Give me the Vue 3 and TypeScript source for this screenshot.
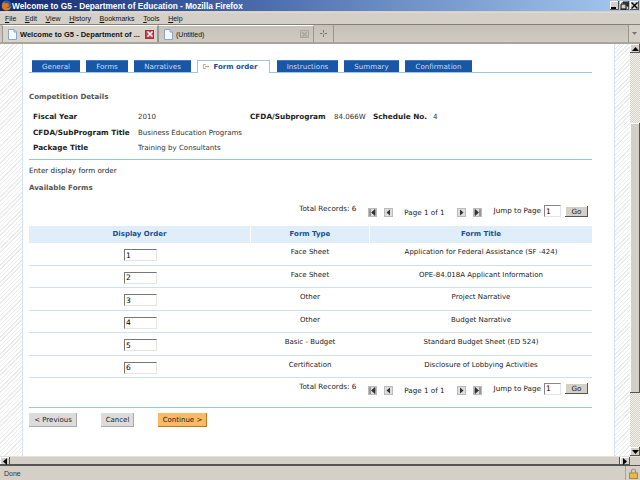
<script setup lang="ts">
interface FormRow {
  order: string
  type: string
  title: string
}

const menus = [
  { key: 'F', rest: 'ile' },
  { key: 'E', rest: 'dit' },
  { key: 'V', rest: 'iew' },
  { key: 'H', rest: 'istory' },
  { key: 'B', rest: 'ookmarks' },
  { key: 'T', rest: 'ools' },
  { key: 'H', rest: 'elp' },
]

const tabs = [
  { label: 'General', width: 48 },
  { label: 'Forms', width: 42 },
  { label: 'Narratives', width: 57 },
  { label: 'Form order', width: 73, active: true },
  { label: 'Instructions', width: 61 },
  { label: 'Summary', width: 55 },
  { label: 'Confirmation', width: 67 },
]

const rows: FormRow[] = [
  { order: '1', type: 'Face Sheet', title: 'Application for Federal Assistance (SF -424)' },
  { order: '2', type: 'Face Sheet', title: 'OPE-84.018A Applicant Information' },
  { order: '3', type: 'Other', title: 'Project Narrative' },
  { order: '4', type: 'Other', title: 'Budget Narrative' },
  { order: '5', type: 'Basic - Budget', title: 'Standard Budget Sheet (ED 524)' },
  { order: '6', type: 'Certification', title: 'Disclosure of Lobbying Activities' },
]
</script>

<template>
  <div class="window">
    <div class="titlebar">
      <svg class="fox" width="11" height="11" viewBox="0 0 11 11">
        <circle cx="5.5" cy="5.5" r="5" fill="#2b5fa8" />
        <path d="M1 7c0-3 1-5 3-6-1 1-1 2 0 2.500 2-1 4 0 4 2 0 1-1 2-3 2 2 1 5 0 5.500-2C10 9 8 10.500 5.500 10.500 3 10.500 1.500 9 1 7z" fill="#e8761a" />
      </svg>
      <span class="title-text">Welcome to G5 - Department of Education - Mozilla Firefox</span>
      <div class="win-btns">
        <span class="win-btn"><svg width="9" height="9" viewBox="0 0 9 9"><rect x="1" y="6" width="5" height="2" fill="#000" /></svg></span>
        <span class="win-btn"><svg width="9" height="9" viewBox="0 0 9 9"><path d="M3 1h5v4H7V2H3zM1 3h5v5H1z" fill="none" stroke="#000" /></svg></span>
        <span class="win-btn"><svg width="9" height="9" viewBox="0 0 9 9"><path d="M1.500 1.500l6 6M7.500 1.500l-6 6" stroke="#000" stroke-width="1.400" /></svg></span>
      </div>
    </div>

    <div class="menubar">
      <span v-for="m in menus" :key="m.key + m.rest" class="menu-item"><u>{{ m.key }}</u>{{ m.rest }}</span>
    </div>

    <div class="tabstrip">
      <div class="ff-tab ff-tab-on">
        <svg class="page-ico" width="9" height="11" viewBox="0 0 9 11"><path d="M.5.500h5.500l2.500 2.500v7.500h-8z" fill="#f4f8ff" stroke="#8aa4c8" /><path d="M6 .5v2.500h2.500" fill="#c8d8f0" stroke="#8aa4c8" /></svg>
        <span class="ff-tab-label strong">Welcome to G5 - Department of ...</span>
        <span class="ff-close"><svg width="8" height="8" viewBox="0 0 8 8"><path d="M1.500 1.500l5 5M6.500 1.500l-5 5" stroke="#fff" stroke-width="1.500" /></svg></span>
      </div>
      <div class="ff-tab ff-tab-off">
        <svg class="page-ico" width="9" height="11" viewBox="0 0 9 11"><path d="M.5.500h5.500l2.500 2.500v7.500h-8z" fill="#f4f8ff" stroke="#8aa4c8" /><path d="M6 .5v2.500h2.500" fill="#c8d8f0" stroke="#8aa4c8" /></svg>
        <span class="ff-tab-label">(Untitled)</span>
        <span class="ff-close-off"><svg width="7" height="7" viewBox="0 0 7 7"><path d="M1 1l5 5M6 1l-5 5" stroke="#a8a59c" stroke-width="1.200" /></svg></span>
      </div>
      <div class="ff-new"><svg width="7" height="7" viewBox="0 0 7 7"><path d="M3.500 0v2.500M3.500 4.500V7M0 3.500h2.500M4.500 3.500H7" stroke="#77746c" /></svg></div>
      <div class="tab-spacer"></div>
      <div class="ff-list"><svg width="5" height="3" viewBox="0 0 5 3"><path d="M0 0h5L2.500 3z" fill="#77746c" /></svg></div>
    </div>

    <div class="viewport">
      <div class="gutter gutter-left"></div>
      <div class="page">
        <nav class="tabs">
          <a v-for="t in tabs" :key="t.label" class="tab" :class="{ active: t.active }" :style="{ width: t.width + 'px' }">
            <svg v-if="t.active" class="tab-ico" width="6" height="5" viewBox="0 0 6 5"><path d="M0 .5h3M0 4.500h3M.5 0v5" stroke="#9db8d8" fill="none" /><path d="M2 2.500h4" stroke="#f0a030" stroke-width="1.200" /></svg>
            {{ t.label }}
          </a>
        </nav>

        <h3 class="section first">Competition Details</h3>

        <div class="details">
          <div class="detail-row">
            <span class="lbl l1">Fiscal Year</span>
            <span class="val v1">2010</span>
            <span class="lbl l2">CFDA/Subprogram</span>
            <span class="val v2">84.066W</span>
            <span class="lbl l3">Schedule No.</span>
            <span class="val">4</span>
          </div>
          <div class="detail-row">
            <span class="lbl l1">CFDA/SubProgram Title</span>
            <span class="val">Business Education Programs</span>
          </div>
          <div class="detail-row">
            <span class="lbl l1">Package Title</span>
            <span class="val">Training by Consultants</span>
          </div>
        </div>

        <p class="enter">Enter display form order</p>
        <h3 class="section">Available Forms</h3>

        <div class="pager top-pager">
          <span class="records">Total Records: 6</span>
          <span class="pg-btn"><svg width="7" height="7" viewBox="0 0 7 7"><path d="M1 0v7M6 .5v6L2.500 3.500z" stroke="#333" stroke-width=".8" fill="#333" /></svg></span>
          <span class="pg-btn wide"><svg width="7" height="7" viewBox="0 0 7 7"><path d="M5 .5v6L1.500 3.500z" fill="#333" /></svg></span>
          <span class="pg-text">Page 1 of 1</span>
          <span class="pg-btn"><svg width="7" height="7" viewBox="0 0 7 7"><path d="M2 .5v6l3.500-3z" fill="#333" /></svg></span>
          <span class="pg-btn last"><svg width="7" height="7" viewBox="0 0 7 7"><path d="M6 0v7M1 .5v6l3.500-3z" stroke="#333" stroke-width=".8" fill="#333" /></svg></span>
          <span class="jump">Jump to Page</span>
          <input class="jump-input" value="1" />
          <button class="go">Go</button>
        </div>

        <div class="grid head">
          <div>Display Order</div>
          <div>Form Type</div>
          <div>Form Title</div>
        </div>
        <div v-for="r in rows" :key="r.order" class="grid row">
          <div class="order-cell"><input class="order-input" :value="r.order" /></div>
          <div class="cell">{{ r.type }}</div>
          <div class="cell">{{ r.title }}</div>
        </div>

        <div class="pager bottom-pager">
          <span class="records">Total Records: 6</span>
          <span class="pg-btn"><svg width="7" height="7" viewBox="0 0 7 7"><path d="M1 0v7M6 .5v6L2.500 3.500z" stroke="#333" stroke-width=".8" fill="#333" /></svg></span>
          <span class="pg-btn wide"><svg width="7" height="7" viewBox="0 0 7 7"><path d="M5 .5v6L1.500 3.500z" fill="#333" /></svg></span>
          <span class="pg-text">Page 1 of 1</span>
          <span class="pg-btn"><svg width="7" height="7" viewBox="0 0 7 7"><path d="M2 .5v6l3.500-3z" fill="#333" /></svg></span>
          <span class="pg-btn last"><svg width="7" height="7" viewBox="0 0 7 7"><path d="M6 0v7M1 .5v6l3.500-3z" stroke="#333" stroke-width=".8" fill="#333" /></svg></span>
          <span class="jump">Jump to Page</span>
          <input class="jump-input" value="1" />
          <button class="go">Go</button>
        </div>

        <div class="actions">
          <button class="act prev">&lt; Previous</button>
          <button class="act cancel">Cancel</button>
          <button class="act cont">Continue &gt;</button>
        </div>
      </div>
      <div class="gutter gutter-right"></div>
      <div class="vscroll">
        <span class="sb-btn"><svg width="7" height="4" viewBox="0 0 7 4"><path d="M3.500 0L7 4H0z" fill="#000" /></svg></span>
        <div class="sb-before"></div>
        <div class="sb-thumb"></div>
        <div class="sb-track"></div>
        <span class="sb-btn"><svg width="7" height="4" viewBox="0 0 7 4"><path d="M0 0h7L3.500 4z" fill="#000" /></svg></span>
      </div>
    </div>

    <div class="hscroll">
      <span class="sb-btn h"><svg width="4" height="7" viewBox="0 0 4 7"><path d="M4 0v7L0 3.500z" fill="#000" /></svg></span>
      <div class="h-thumb"></div>
      <span class="sb-btn h"><svg width="4" height="7" viewBox="0 0 4 7"><path d="M0 0v7l4-3.500z" fill="#000" /></svg></span>
      <div class="corner"></div>
    </div>

    <div class="statusbar">
      <span class="done">Done</span>
      <span class="lock">
        <svg width="9" height="11" viewBox="0 0 9 11"><path d="M2.500 5V3a2 2 0 014 0v2" fill="none" stroke="#a89060" stroke-width="1.200" /><rect x=".5" y="5" width="8" height="5.500" fill="#e8b850" stroke="#b08a30" /></svg>
      </span>
    </div>
  </div>
</template>

<style>
html, body { margin: 0; padding: 0; overflow: hidden; }
</style>

<style scoped>
.window {
  width: 640px;
  height: 480px;
  display: flex;
  flex-direction: column;
  font-family: "DejaVu Sans", Verdana, sans-serif;
  font-size: 7px;
  color: #222;
  background: #d4d0c8;
  overflow: hidden;
}
.titlebar {
  height: 11px;
  display: flex;
  align-items: center;
  background: linear-gradient(90deg, #12296e 0%, #3a5a9e 30%, #6a8cc4 60%, #a6caf0 100%);
  flex: none;
}
.fox { flex: none; margin-left: 1px; }
.title-text {
  margin-left: 0;
  color: #fff;
  font-family: "Liberation Sans", Arial, sans-serif;
  font-weight: 700;
  font-size: 8.300px;
  white-space: nowrap;
}
.win-btns { margin-left: auto; display: flex; gap: 1px; margin-right: 1px; }
.win-btn {
  width: 9px;
  height: 9px;
  background: #d4d0c8;
  box-shadow: inset -1px -1px 0 #555, inset 1px 1px 0 #fff;
  display: flex;
}
.menubar {
  height: 11px;
  margin-top: 1px;
  display: flex;
  align-items: center;
  gap: 8.600px;
  padding-left: 5px;
  border-top: 1px solid #e2d9cc;
  border-bottom: 1px solid #85827a;
  font-family: "Liberation Sans", Arial, sans-serif;
  font-size: 7px;
  color: #111;
  flex: none;
}
.tabstrip {
  height: 17px;
  display: flex;
  align-items: stretch;
  background: linear-gradient(#c4c0b7, #d0ccc4);
  border-bottom: 2px solid #a8a59c;
  font-family: "Liberation Sans", Arial, sans-serif;
  font-size: 7px;
  padding-left: 2px;
  flex: none;
}
.ff-tab {
  display: flex;
  align-items: center;
  border: 1px solid #9a978e;
  border-top-color: #fff;
  border-bottom: none;
  padding-left: 5px;
  box-sizing: border-box;
  flex: none;
}
.ff-tab-on { width: 156px; background: #d8d4cc; }
.ff-tab-off { width: 156px; }
.page-ico { flex: none; }
.ff-tab-label { margin-left: 3px; white-space: nowrap; color: #111; }
.strong { font-weight: 700; font-size: 7.500px; }
.ff-close {
  margin-left: auto;
  margin-right: 3px;
  width: 9px;
  height: 9px;
  flex: none;
  background: #c8404a;
  display: flex;
  align-items: center;
  justify-content: center;
  box-shadow: inset 0 0 0 1px #a03038;
}
.ff-close-off {
  margin-left: auto;
  margin-right: 4px;
  width: 9px;
  height: 8px;
  flex: none;
  background: #c4c0b7;
  display: flex;
  align-items: center;
  justify-content: center;
  box-shadow: inset 0 0 0 1px #aaa79e;
}
.ff-new {
  width: 19px;
  display: flex;
  align-items: center;
  justify-content: center;
  border-right: 1px solid #9a978e;
}
.tab-spacer { flex: 1; }
.ff-list {
  width: 11px;
  display: flex;
  align-items: center;
  justify-content: center;
  border-left: 1px solid #9a978e;
  background: #d4d0c8;
}
.viewport { height: 412px; display: flex; flex: none; background: #fff; }
.gutter {
  flex: none;
  background-color: #fff;
  background-image: repeating-linear-gradient(135deg, #ebebeb 0 1px, #fff 1px 3px);
}
.gutter-left { width: 22px; border-right: 1px solid #d3e2f4; }
.gutter-right { width: 15px; border-left: 1px solid #d3e2f4; }
.page { width: 591px; box-sizing: border-box; padding: 16px 22px 0 6px; flex: none; }
.tabs {
  display: flex;
  gap: 6px;
  padding-left: 3px;
  height: 12px;
  border-bottom: 1px solid #9cc4e6;
}
.tab {
  height: 12px;
  box-sizing: border-box;
  background: #1a56a6;
  border-top: 1px solid #3a7cc8;
  color: #c8dcf2;
  text-align: center;
  line-height: 12px;
  font-size: 7.100px;
}
.tab.active {
  background: #fff;
  color: #1a4e96;
  font-weight: 700;
  font-size: 7px;
  height: 13px;
  border: 1px solid #9cc4e6;
  border-bottom: none;
  margin-right: 1px;
  text-align: left;
  padding-left: 5px;
}
.tab-ico { margin-right: 2px; }
.section {
  margin: 7px 0 0;
  font-size: 7.100px;
  line-height: 10px;
  font-weight: 700;
  color: #555;
}
.section.first { margin-top: 19px; }
.details {
  margin-top: 7px;
  padding: 0 0 0 4px;
  height: 50px;
  border-bottom: 1px solid #9cc0e0;
}
.detail-row { display: flex; height: 15.500px; align-items: center; }
.lbl { font-weight: 700; font-size: 7.300px; color: #222; flex: none; }
.l1 { width: 105px; }
.v1 { width: 112px; }
.l2 { width: 84px; }
.v2 { width: 39px; color: #555; }
.l3 { width: 60px; }
.val { color: #333; font-size: 7.050px; }
.enter { margin: 5px 0 0; line-height: 11px; font-size: 7.200px; color: #222; }
.pager {
  display: flex;
  align-items: center;
  justify-content: flex-end;
  padding-right: 4px;
  font-size: 7.200px;
}
.top-pager { margin-top: 11px; height: 17px; }
.records { margin-right: 12px; margin-top: -8px; }
.pg-btn {
  width: 9px;
  height: 9px;
  box-sizing: border-box;
  background: #ddd;
  border: 1px solid #bbb;
  display: flex;
  align-items: center;
  justify-content: center;
  margin-right: 7px;
}
.pg-btn svg { flex: none; }
.pg-btn.wide { margin-right: 11px; }
.pg-btn.last { margin-right: 12px; }
.pg-text { margin-right: 12px; }
.jump { margin-right: 3px; margin-top: -4px; }
.jump-input {
  width: 17px;
  height: 12px;
  box-sizing: border-box;
  border: 1px solid #888;
  border-right-color: #e4e4e4;
  border-bottom-color: #e4e4e4;
  padding: 0 1px;
  font: inherit;
  font-size: 7.500px;
  margin: -3px 4px 0 0;
  background: #fff;
}
.go {
  width: 23px;
  height: 11px;
  box-sizing: border-box;
  padding: 0;
  margin-top: -3px;
  border: none;
  box-shadow: inset -1px -1px 0 #555, inset 1px 1px 0 #fff;
  background: #d4d0c8;
  font: inherit;
  color: #222;
}
.grid {
  display: grid;
  grid-template-columns: 221px 118px 222px;
  gap: 0 1px;
  text-align: center;
}
.head { margin-top: 5px; height: 17px; line-height: 17px; color: #1a4e96; font-weight: 700; }
.head > div { background: #dfeef8; }
.row {
  height: 22.500px;
  box-sizing: border-box;
  border-bottom: 1px solid #cfe0f2;
}
.order-cell { display: flex; justify-content: center; padding: 6px 0 0 2px; }
.order-input {
  width: 33px;
  height: 12px;
  box-sizing: border-box;
  border: 1px solid #e8e4e0;
  border-top-color: #777;
  border-left-color: #777;
  padding: 0 1px;
  margin: 0;
  font: inherit;
  font-size: 7.500px;
  background: #fff;
}
.cell { padding-top: 4px; line-height: 10px; }
.bottom-pager {
  height: 30px;
  box-sizing: border-box;
  padding-top: 3px;
  padding-bottom: 8px;
  border-bottom: 1px solid #9cc4e6;
}
.actions { display: flex; margin-top: 5px; }
.act {
  height: 14px;
  box-sizing: border-box;
  padding: 0;
  border: none;
  background: #dcdcdc;
  font: inherit;
  color: #222;
  box-shadow: inset -1px -1px 0 #aaa;
}
.prev { width: 48px; }
.cancel { width: 33px; margin-left: 24px; }
.cont { width: 49px; margin-left: 24px; background: #fbb963; box-shadow: inset -1px -1px 0 #b87820; }
.vscroll {
  width: 10px;
  flex: none;
  display: flex;
  flex-direction: column;
  background-image: repeating-conic-gradient(#d4d0c8 0 25%, #f4f2ee 0 50%);
  background-size: 2px 2px;
}
.sb-btn {
  height: 9px;
  width: 10px;
  flex: none;
  background: #d4d0c8;
  box-shadow: inset -1px -1px 0 #555, inset 1px 1px 0 #fff;
  display: flex;
  align-items: center;
  justify-content: center;
}
.sb-before { flex: none; height: 70px; }
.sb-track { flex: 1; }
.sb-thumb {
  height: 270px;
  flex: none;
  background: #d4d0c8;
  box-shadow: inset -1px -1px 0 #555, inset 1px 1px 0 #fff;
}
.hscroll {
  height: 8px;
  display: flex;
  background: #d4d0c8;
  flex: none;
  border-top: 1px solid #e8e0d8;
  border-bottom: 1px solid #555;
}
.sb-btn.h { height: 8px; }
.h-thumb { flex: 1; box-shadow: inset -1px -1px 0 #555; }
.corner { width: 10px; }
.statusbar {
  flex: 1;
  display: flex;
  align-items: center;
  padding-left: 4px;
  font-family: "Liberation Sans", Arial, sans-serif;
  font-size: 7px;
  color: #333;
}
.lock {
  margin-left: auto;
  width: 14px;
  height: 100%;
  border-left: 1px solid #a8a59c;
  display: flex;
  align-items: center;
  justify-content: center;
}
</style>
